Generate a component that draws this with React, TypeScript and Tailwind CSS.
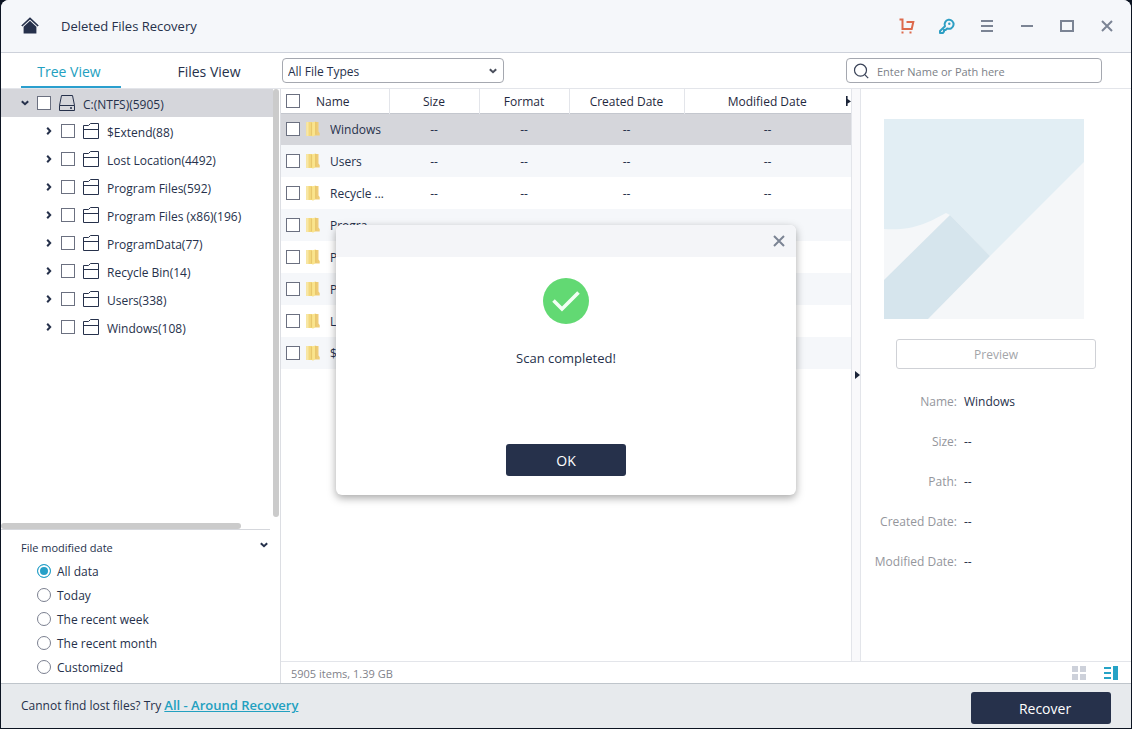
import { useState } from "react";

const tree = [
  "$Extend(88)",
  "Lost Location(4492)",
  "Program Files(592)",
  "Program Files (x86)(196)",
  "ProgramData(77)",
  "Recycle Bin(14)",
  "Users(338)",
  "Windows(108)",
];

const files = [
  "Windows",
  "Users",
  "Recycle Bin",
  "Program Files",
  "Program Files (x86)",
  "ProgramData",
  "Lost Location",
  "$Extend",
];

const dates = ["All data", "Today", "The recent week", "The recent month", "Customized"];

const details = [
  { label: "Name:", value: "Windows" },
  { label: "Size:", value: "--" },
  { label: "Path:", value: "--" },
  { label: "Created Date:", value: "--" },
  { label: "Modified Date:", value: "--" },
];

const Checkbox = ({ label }: { label?: string }) => (
  <input
    type="checkbox"
    aria-label={label}
    className="block size-3.5 shrink-0 appearance-none border border-[#6b7080] bg-white checked:bg-[#26a0c8]"
  />
);

const Chevron = ({ down }: { down?: boolean }) => (
  <svg viewBox="0 0 10 10" className="size-2.5 shrink-0" fill="none" stroke="currentColor" strokeWidth="2" aria-hidden="true">
    {down ? <path d="M1.8 3.2 5 6.2 8.2 3.2" /> : <path d="M3.2 1.8 6.2 5 3.2 8.2" />}
  </svg>
);

const DriveIcon = () => (
  <svg viewBox="0 0 16 16" className="size-4 shrink-0" fill="none" stroke="#26314b" aria-hidden="true">
    <path d="M2.5.5h11l2 10v5H.5v-5z M.5 10.5h15" />
    <path d="M11 13h2" strokeWidth="1.4" />
  </svg>
);

const FolderOutline = () => (
  <svg viewBox="0 0 16 16" className="size-4 shrink-0" fill="none" stroke="#26314b" aria-hidden="true">
    <path d="M.5 2.5h5l2-2h8v15H.5z M.5 6.5h15" />
  </svg>
);

const FolderIcon = () => (
  <svg viewBox="0 0 14 16" className="h-4 w-3.5 shrink-0" aria-hidden="true">
    <path d="M8 1h4.5v9.5l1.2 1.5v2.5H8z" fill="#efcd78" />
    <path d="M.3 1h6v14h-6z" fill="#f3d87c" />
    <path d="M.3 1h2.2v14H.3z" fill="#f8e7a4" />
    <path d="M5.5 1.6 9.6.6v13.2l-2.6 2-1.5-1z" fill="#fae48c" />
    <path d="M5.6 1.6v13M9.7.8v13" stroke="#dcb558" strokeWidth=".6" fill="none" />
  </svg>
);

const CloseIcon = () => (
  <svg viewBox="0 0 16 16" className="size-4" fill="none" stroke="#7b8494" strokeWidth="2" aria-hidden="true">
    <path d="m3 3 10 10M13 3 3 13" />
  </svg>
);

const TitleBar = () => (
  <header className="flex h-[53px] items-center border-b border-[#cdd1da] bg-[#f5f7fa] pr-4 pl-5">
    <button type="button" aria-label="Home">
      <svg viewBox="0 0 18 18" className="size-[18px]" aria-hidden="true">
        <path d="M.8 9 9 1.4 17.2 9" fill="none" stroke="#26314b" strokeWidth="1.7" />
        <path d="m9 3.8 6.4 5.9v6.8H2.6V9.700z" fill="#26314b" />
      </svg>
    </button>
    <h1 className="ml-[22px] flex-1 pt-0.5 text-[13px] font-medium">Deleted Files Recovery</h1>
    <div className="flex gap-6">
      <button type="button" aria-label="Buy">
        <svg viewBox="0 0 16 16" className="size-4" fill="none" stroke="#dd6a4c" strokeWidth="2" aria-hidden="true">
          <path d="M.5 1.500h3v9.500h9.200L14.300 4H7.500" />
          <path d="M2.500 14.500h2M10.500 14.500h2" />
        </svg>
      </button>
      <button type="button" aria-label="Activate">
        <svg viewBox="0 0 16 16" className="size-4" fill="none" stroke="#2e9fc4" strokeWidth="2" aria-hidden="true">
          <path d="M6 8.200a4.500 4.500 0 1 1 2.200 2.200L6.600 12H5v1.600L3.800 15H1v-2z" strokeLinejoin="round" />
          <circle cx="10.300" cy="5.700" r="1.200" fill="#2e9fc4" stroke="none" />
        </svg>
      </button>
      <button type="button" aria-label="Menu">
        <svg viewBox="0 0 16 16" className="size-4" stroke="#7b8494" strokeWidth="2" aria-hidden="true">
          <path d="M2 3h12M2 8h12M2 13h12" />
        </svg>
      </button>
      <button type="button" aria-label="Minimize">
        <svg viewBox="0 0 16 16" className="size-4" stroke="#7b8494" strokeWidth="2" aria-hidden="true">
          <path d="M2 8h12" />
        </svg>
      </button>
      <button type="button" aria-label="Maximize">
        <svg viewBox="0 0 16 16" className="size-4" fill="none" stroke="#7b8494" strokeWidth="2" aria-hidden="true">
          <path d="M2 3h12v10H2z" />
        </svg>
      </button>
      <button type="button" aria-label="Close">
        <CloseIcon />
      </button>
    </div>
  </header>
);

const Toolbar = () => (
  <div className="flex h-9 items-stretch border-b border-[#e3e5ea]">
    <div className="flex w-[281px] shrink-0 gap-10 pl-5 text-sm">
      <button type="button" className="w-[100px] border-b-2 border-[#2b9fce] pt-1 text-[#22a0c0]">
        <span className="block pr-1">Tree View</span>
      </button>
      <button type="button" className="w-[100px] border-b-2 border-transparent pt-1">
        <span className="block pr-1">Files View</span>
      </button>
    </div>
    <div className="flex flex-1 items-center justify-between pr-[29px]">
      <div className="relative flex items-center">
        <select
          aria-label="File type"
          className="h-[25px] w-[222px] appearance-none rounded-sm border border-[#a5a8b0] bg-white pt-0.5 pl-[5px] text-xs"
        >
          <option>All File Types</option>
        </select>
        <span className="pointer-events-none absolute right-1.5 text-[#4a4f5c]">
          <Chevron down />
        </span>
      </div>
      <div className="flex h-[25px] w-64 items-center rounded-sm border border-[#a5a8b0] bg-white pl-1.5">
        <svg viewBox="0 0 16 16" className="size-4 shrink-0" fill="none" stroke="#3a4358" strokeWidth="1.2" aria-hidden="true">
          <circle cx="7.5" cy="7.2" r="6" />
          <path d="m11.8 11.6 3.4 3.6" />
        </svg>
        <input
          type="text"
          aria-label="Search"
          placeholder="Enter Name or Path here"
          className="ml-2 min-w-0 flex-1 pt-[3px] text-[11px] outline-none placeholder:text-[#7c7f88]"
        />
      </div>
    </div>
  </div>
);

const Sidebar = () => {
  const [date, setDate] = useState("All data");

  return (
    <aside className="flex w-[280px] shrink-0 flex-col border-r border-[#dcdee3]">
      <div className="flex flex-1 pr-px">
        <div className="flex flex-1 flex-col text-xs">
          <div className="flex h-7 items-center gap-[7px] bg-[#d5d6db] pl-[19px]">
            <button type="button" aria-label="Collapse">
              <Chevron down />
            </button>
            <label className="flex items-center gap-2">
              <Checkbox />
              <DriveIcon />
              <span className="pt-1">C:(NTFS)(5905)</span>
            </label>
          </div>
          {tree.map((name) => (
            <div key={name} className="flex h-7 items-center gap-[7px] pl-[43px]">
              <button type="button" aria-label="Expand">
                <Chevron />
              </button>
              <label className="flex items-center gap-2">
                <Checkbox />
                <FolderOutline />
                <span className="pt-1">{name}</span>
              </label>
            </div>
          ))}
          <div className="mt-auto h-1.5 w-60 rounded-full bg-[#cbcbcb]"></div>
        </div>
        <div className="mb-3 w-1.5 rounded-full bg-[#cbcbcb]"></div>
      </div>
      <fieldset className="mr-2.5 border-t border-[#d5d7dc] pt-1.5 pr-px pb-1 pl-5">
        <div className="flex h-[23px] justify-between pt-1 text-[11px] leading-4">
          <span>File modified date</span>
          <Chevron down />
        </div>
        {dates.map((name) => (
          <label key={name} className="flex h-6 items-center gap-1.5 pl-4 text-xs">
            <input
              type="radio"
              name="date"
              checked={date === name}
              onChange={() => setDate(name)}
              className="size-3.5 appearance-none rounded-full border border-[#7b8090] bg-white checked:border-[#26a0c8] checked:bg-[#26a0c8] checked:ring-2 checked:ring-white checked:ring-inset"
            />
            <span className="pt-0.5">{name}</span>
          </label>
        ))}
      </fieldset>
    </aside>
  );
};

const FileTable = () => (
  <div className="min-w-0 flex-1">
    <table className="w-full table-fixed border-collapse text-center text-xs">
      <thead>
        <tr className="h-6 border-b border-[#c4c7ce] text-[#1f2940]">
          <th className="w-[108px] border-r border-[#e3e5ea] p-0 font-normal">
            <div className="flex items-center gap-4 pl-[5px]">
              <Checkbox label="Select all" />
              <span className="pt-0.5">Name</span>
            </div>
          </th>
          <th className="w-[90px] border-r border-[#e3e5ea] p-0 pt-0.5 font-normal">Size</th>
          <th className="w-[90px] border-r border-[#e3e5ea] p-0 pt-0.5 font-normal">Format</th>
          <th className="w-[115px] border-r border-[#e3e5ea] p-0 pt-0.5 font-normal">Created Date</th>
          <th className="p-0 font-normal">
            <div className="flex items-center">
              <span className="flex-1 pt-0.5 pl-1">Modified Date</span>
              <svg viewBox="0 0 5 10" className="h-2.5 w-[5px]" fill="#1b2438" aria-hidden="true">
                <path d="M0 0h1.6v3L5 5.4 1.6 7.6V10H0z" />
              </svg>
            </div>
          </th>
        </tr>
      </thead>
      <tbody>
        {files.map((name) => (
          <tr key={name} className="h-8 first:bg-[#d5d6db] even:bg-[#f5f7fa]">
            <td className="p-0">
              <label className="flex items-center gap-1.5 pl-[5px] text-left">
                <Checkbox />
                <FolderIcon />
                <span className="ml-1 w-14 truncate pt-0.5">{name}</span>
              </label>
            </td>
            <td className="p-0 pt-0.5">--</td>
            <td className="p-0 pt-0.5">--</td>
            <td className="p-0 pt-0.5">--</td>
            <td className="p-0 pt-0.5">--</td>
          </tr>
        ))}
      </tbody>
    </table>
  </div>
);

const Details = () => (
  <section className="w-[270px] shrink-0 pt-[30px]">
    <svg viewBox="0 0 200 200" className="ml-[23px] size-[200px]" aria-hidden="true">
      <path d="M0 0h200v200H0z" fill="#f5f7f9" />
      <path d="M0 0h200v43L106 137 66 96 62 94C45 103 30 112 0 110z" fill="#e2eef4" />
      <path d="M0 161 66 96l40 41-62 63H0z" fill="#d6e5ed" />
    </svg>
    <button
      type="button"
      disabled
      className="mx-auto mt-5 block h-[30px] w-[200px] rounded-[3px] border border-[#cfd1d6] pt-0.5 text-xs text-[#a3a5a9]"
    >
      Preview
    </button>
    <dl className="mt-[13px] text-xs">
      {details.map(({ label, value }) => (
        <div key={label} className="flex h-10 items-center gap-[7px]">
          <dt className="w-24 text-right text-[#94969c]">{label}</dt>
          <dd>{value}</dd>
        </div>
      ))}
    </dl>
  </section>
);

const StatusBar = () => (
  <div className="flex h-[22px] items-center border-t border-[#e3e5ea] pr-3 pl-2.5">
    <span className="flex-1 pt-[3px] text-[11px] text-[#7f828a]">5905 items, 1.39 GB</span>
    <div className="flex gap-4">
      <button type="button" aria-label="Grid view">
        <svg viewBox="0 0 16 16" className="size-4" fill="#cdd1da" aria-hidden="true">
          <path d="M1 1h6v6H1zM9 1h6v6H9zM1 9h6v6H1zM9 9h6v6H9z" />
        </svg>
      </button>
      <button type="button" aria-label="Detail view">
        <svg viewBox="0 0 16 16" className="size-4" fill="#26a3c6" aria-hidden="true">
          <path d="M1 2h7v2H1zM1 7h7v2H1zM1 12h7v2H1zM10 1h5v14h-5z" />
        </svg>
      </button>
    </div>
  </div>
);

const ScanDialog = ({ onClose }: { onClose: () => void }) => (
  <div className="absolute inset-0 flex items-center justify-center pb-[9px]">
    <div
      role="dialog"
      aria-label="Scan completed"
      className="flex h-[270px] w-[460px] flex-col items-center overflow-hidden rounded-md bg-white shadow-[0_3px_8px_rgba(0,0,0,0.35)]"
    >
      <div className="flex h-8 w-full items-center justify-end bg-[#f4f5f8] pr-[9px]">
        <button type="button" aria-label="Close dialog" onClick={onClose}>
          <CloseIcon />
        </button>
      </div>
      <svg viewBox="0 0 46 46" className="mt-[21px] size-[46px]" aria-hidden="true">
        <circle cx="23" cy="23" r="23" fill="#62d973" />
        <path d="m10.500 22.500 8.500 8.500L35.500 14.500" fill="none" stroke="#f2fff4" strokeWidth="3.600" />
      </svg>
      <p className="mt-6 text-[13px] leading-5">Scan completed!</p>
      <button
        type="button"
        onClick={onClose}
        className="mt-auto mb-[19px] h-8 w-[120px] rounded-[3px] bg-[#26314b] pt-0.5 text-sm font-medium text-white"
      >
        OK
      </button>
    </div>
  </div>
);

const App = () => {
  const [open, setOpen] = useState(true);

  return (
    <div className="relative flex min-h-screen flex-col bg-[#0c1422] px-px pb-px font-['Open_Sans',sans-serif] text-[#26314b]">
      <div className="flex flex-1 flex-col overflow-hidden rounded-t-lg bg-white">
        <TitleBar />
        <Toolbar />
        <main className="flex flex-1">
          <Sidebar />
          <div className="flex min-w-0 flex-1 flex-col">
            <div className="flex flex-1">
              <FileTable />
              <div className="flex w-2.5 items-center border-x border-[#e3e5ea] bg-[#f9f9fb] pl-[3px]">
                <button type="button" aria-label="Hide details">
                  <svg viewBox="0 0 5 8" className="h-2 w-[5px]" fill="#1b2438" aria-hidden="true">
                    <path d="M0 0 5 4 0 8z" />
                  </svg>
                </button>
              </div>
              <Details />
            </div>
            <StatusBar />
          </div>
        </main>
        <footer className="flex h-[45px] items-center justify-between border-t border-[#bfc5cb] bg-[#e7eaed] px-5">
          <p className="text-xs">
            Cannot find lost files? Try{" "}
            <a href="#all-around" className="text-[13px] font-semibold text-[#22a0c0] underline">
              All - Around Recovery
            </a>
          </p>
          <button
            type="button"
            className="mt-1 h-8 w-[140px] rounded-[3px] bg-[#26314b] pt-0.5 pl-2 text-sm font-medium text-white"
          >
            Recover
          </button>
        </footer>
      </div>
      {open && <ScanDialog onClose={() => setOpen(false)} />}
    </div>
  );
};

export default App;
